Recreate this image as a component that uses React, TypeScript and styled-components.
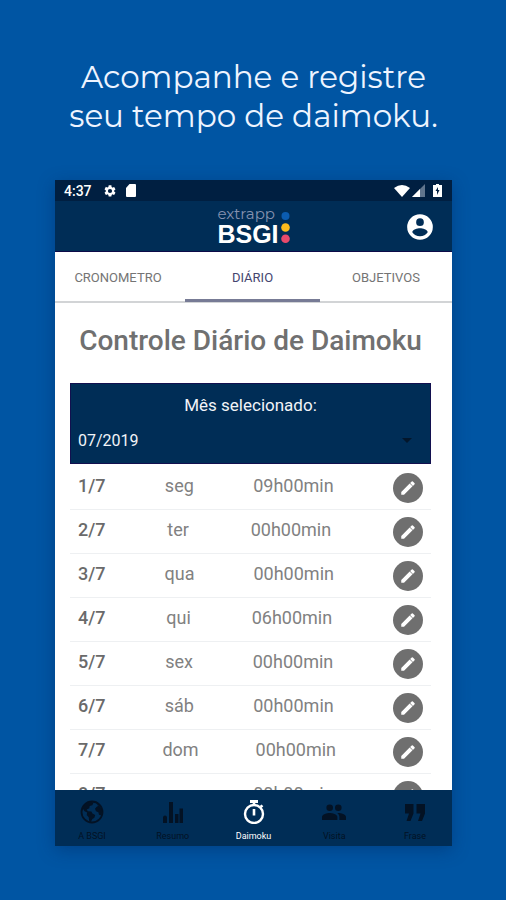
import React from "react";
import styled, { createGlobalStyle } from "styled-components";

const GlobalStyle = createGlobalStyle`
  *, *::before, *::after { box-sizing: border-box; }
  body { margin: 0; background: #0055a3; font-family: Roboto, "Liberation Sans", sans-serif; }
  button, select { font: inherit; color: inherit; border: 0; background: none; padding: 0; margin: 0; }
`;

const Page = styled.main`
  height: 100vh;
  display: flex;
  flex-direction: column;
  padding: 58px 54px 54px 55px;
  background: #0055a3;
  overflow: hidden;
`;

const Headline = styled.h1`
  margin: 0 -20px 44px;
  color: #eef4ff;
  font-family: Montserrat, Figtree, Inter, sans-serif;
  font-size: 31px;
  line-height: 39px;
  font-weight: 400;
  text-align: center;
`;

const HeadlineLine = styled.span`
  display: block;
`;

const Phone = styled.section`
  flex: 1;
  min-height: 0;
  display: flex;
  flex-direction: column;
  background: #fff;
  box-shadow: 0 4px 16px rgba(0, 30, 80, 0.35);
`;

const StatusBar = styled.div`
  flex: none;
  display: flex;
  align-items: center;
  height: 21px;
  padding: 0 10px 0 9px;
  background: #001f41;
  color: #fff;
  font-size: 14px;
  font-weight: 500;
  svg { display: block; }
`;

const StatusGroup = styled.div`
  display: flex;
  align-items: center;
  gap: 8px;
  margin-left: 11px;
`;

const StatusRight = styled(StatusGroup)`
  gap: 2px;
  margin-left: auto;
`;

const BatterySlot = styled.span`
  margin-left: 6px;
`;

const AppBar = styled.header`
  flex: none;
  display: grid;
  grid-template-columns: 1fr auto 1fr;
  align-items: center;
  height: 51px;
  padding: 0 18px;
  background: #002d56;
  border-bottom: 1px solid #0c0a48;
`;

const Logo = styled.div`
  grid-column: 2;
  display: flex;
  align-items: center;
  gap: 2px;
  color: #fff;
`;

const LogoWords = styled.div`
  display: flex;
  flex-direction: column;
`;

const LogoTop = styled.span`
  color: #8592b0;
  font-family: Montserrat, Figtree, Inter, sans-serif;
  font-size: 15px;
  line-height: 16px;
`;

const LogoMain = styled.span`
  font-family: "Liberation Sans", Arial, sans-serif;
  font-size: 25px;
  line-height: 24px;
  font-weight: 700;
`;

const Dots = styled.svg`
  display: block;
  width: 9px;
  height: 34px;
`;

const AccountButton = styled.button`
  justify-self: end;
  width: 28px;
  height: 28px;
  margin-top: 2px;
  color: #fff;
  svg { display: block; }
`;

const Tabs = styled.div`
  flex: none;
  display: grid;
  grid-template-columns: 130fr 135fr 132fr;
  height: 51px;
  border-bottom: 2px solid #d2d4d6;
`;

const Tab = styled.button<{ $active?: boolean }>`
  height: 50px;
  padding-top: 3px;
  font-size: 13px;
  color: ${(p) => (p.$active ? "#45456f" : "#747474")};
  border-bottom: 3px solid ${(p) => (p.$active ? "#777b95" : "transparent")};
  &:first-child { padding-right: 4px; }
`;

const Content = styled.div`
  flex: 1;
  min-height: 0;
  overflow: hidden;
  padding: 0 21px 0 15px;
`;

const Title = styled.h2`
  margin: 20px 0 24px;
  color: #707070;
  font-size: 28px;
  line-height: 36px;
  font-weight: 500;
  text-align: center;
  white-space: nowrap;
`;

const MonthBox = styled.div`
  height: 81px;
  padding: 10px 7px;
  background: #002d56;
  border: 1px solid #12104f;
  color: #f2f4f8;
`;

const MonthLabel = styled.label`
  display: block;
  font-size: 17px;
  line-height: 22px;
  text-align: center;
`;

const SelectRow = styled.div`
  display: grid;
  align-items: center;
  margin-top: 12px;
  > * { grid-area: 1 / 1; }
`;

const MonthSelect = styled.select`
  appearance: none;
  width: 100%;
  height: 24px;
  font-size: 16px;
`;

const Caret = styled.svg`
  justify-self: end;
  margin-right: 11px;
  pointer-events: none;
`;

const Days = styled.ul`
  list-style: none;
  margin: 0;
  padding: 2px 0 0;
`;

const DayRow = styled.li`
  display: flex;
  align-items: center;
  justify-content: space-between;
  height: 44px;
  padding: 0 8px;
  border-bottom: 1px solid #eef0f2;
  color: #818181;
  font-size: 18px;
  line-height: 22px;
`;

const DayText = styled.span`
  padding-bottom: 4px;
`;

const DayDate = styled.strong`
  padding-bottom: 4px;
  color: #6a6a6a;
  font-weight: 500;
`;

const EditButton = styled.button`
  display: grid;
  place-items: center;
  width: 30px;
  height: 30px;
  border-radius: 50%;
  background: #6f6f6f;
  color: #fff;
`;

const BottomNav = styled.nav`
  flex: none;
  display: flex;
  justify-content: space-between;
  height: 56px;
  background: #002d56;
`;

const NavItem = styled.button<{ $active?: boolean }>`
  display: flex;
  flex-direction: column;
  align-items: center;
  gap: 6px;
  width: 74px;
  padding-top: 10px;
  color: ${(p) => (p.$active ? "#fff" : "#031224")};
  font-size: 9px;
  line-height: 12px;
  svg { display: block; }
`;

const Icon = ({ d, size = 24 }: { d: string; size?: number }) => (
  <svg width={size} height={size} viewBox="0 0 24 24" fill="currentColor" aria-hidden="true">
    <path d={d} />
  </svg>
);

const paths = {
  gear: "M19.14 12.94c.04-.3.06-.61.06-.94s-.02-.64-.07-.94l2.03-1.58a.49.49 0 0 0 .12-.61l-1.92-3.32a.49.49 0 0 0-.59-.22l-2.39.96a7 7 0 0 0-1.62-.94l-.36-2.54A.48.48 0 0 0 13.92 2h-3.84a.48.48 0 0 0-.48.41l-.36 2.54a7 7 0 0 0-1.62.94l-2.39-.96a.48.48 0 0 0-.59.22L2.74 8.87a.48.48 0 0 0 .12.61l2.03 1.58a7 7 0 0 0 0 1.88l-2.03 1.58a.49.49 0 0 0-.12.61l1.92 3.32c.12.22.37.29.59.22l2.39-.96c.5.38 1.03.7 1.62.94l.36 2.54c.05.24.24.41.48.41h3.84c.24 0 .44-.17.47-.41l.36-2.54a7 7 0 0 0 1.62-.94l2.39.96c.22.08.47 0 .59-.22l1.92-3.32a.48.48 0 0 0-.12-.61zM12 15.6a3.6 3.6 0 1 1 0-7.2 3.6 3.6 0 0 1 0 7.2z",
  account: "M12 1a11 11 0 1 0 0 22 11 11 0 0 0 0-22zm0 3.600a3.300 3.300 0 1 1 0 6.600 3.300 3.300 0 0 1 0-6.600zm0 15.400a7.900 7.900 0 0 1-6.600-3.500c.03-2.200 4.400-3.400 6.600-3.400s6.570 1.200 6.600 3.400a7.900 7.900 0 0 1-6.600 3.500z",
  pencil: "M3 17.3V21h3.7L18 9.8 14.200 6zM20.800 7a1.200 1.200 0 0 0 0-1.500l-2.300-2.300a1.200 1.200 0 0 0-1.500 0l-2.200 2.200 3.800 3.800z",
  people: "M16.300 11a3.300 3.300 0 1 0 0-6.600 3.300 3.300 0 0 0 0 6.600zM7.700 11a3.300 3.300 0 1 0 0-6.600 3.300 3.300 0 0 0 0 6.600zM7.700 13C5.100 13 0 14.300 0 16.900V20h15.400v-3.100c0-2.600-5.100-3.900-7.700-3.900zM16.300 13l-1.100.1c1.300.9 2.200 2.200 2.200 3.800V20H24v-3.100c0-2.600-5.100-3.900-7.700-3.900z",
  quote: "M2 4h8.500v9.500L7.500 21H3.500l2.500-7.500H2zM13.500 4H22v9.500L19 21h-4l2.500-7.500h-4z",
  bars: "M2 17.500a2 2 0 0 1 4 0V23H2zM8 2h4v21H8zM14 14h3.500v9H14zM18.500 8.500H22V23h-3.500z",
};

const Globe = () => (
  <svg width="24" height="24" viewBox="0 0 24 24" fill="currentColor" aria-hidden="true">
    <circle cx="12" cy="12" r="10.5" fill="none" stroke="currentColor" strokeWidth="1.800" />
    <path d="M2.500 8C4 4.500 7 2 11 1.500l2.500 1.200-1.200 2.600-2.600.7-.4 2.300-2.600 1.200 1.100 1.800 3.600.3 1 2 2.800 1.300-.8 2.800-2 1.200-1.600 3-1.600-.6-.5-4-2-2.300.5-2.400-2.700-1.400zM16.500 3.500l3.700 3.200 2 4.300-.8 4.500-2.400-.7-.6-2.600-2.400-.9-1-2.600 1.700-2 1.400-.6z" />
  </svg>
);

const Stopwatch = () => (
  <svg width="24" height="24" viewBox="0 0 24 24" fill="none" stroke="currentColor" aria-hidden="true">
    <circle cx="12" cy="14" r="9" strokeWidth="2.400" />
    <path d="M8 1.500h8" strokeWidth="3" />
    <path d="M12 2v3M12 9v6.500M18.700 7l1.700-1.700" strokeWidth="2.600" />
  </svg>
);

const days = [
  ["1/7", "seg", "09h00min"],
  ["2/7", "ter", "00h00min"],
  ["3/7", "qua", "00h00min"],
  ["4/7", "qui", "06h00min"],
  ["5/7", "sex", "00h00min"],
  ["6/7", "sáb", "00h00min"],
  ["7/7", "dom", "00h00min"],
  ["8/7", "seg", "00h00min"],
];

export default function App() {
  return (
    <Page>
      <GlobalStyle />
      <Headline>
        <HeadlineLine>Acompanhe e registre</HeadlineLine>
        <HeadlineLine>seu tempo de daimoku.</HeadlineLine>
      </Headline>
      <Phone>
        <StatusBar>
          <span>4:37</span>
          <StatusGroup>
            <Icon d={paths.gear} size={14} />
            <svg width="12" height="13" viewBox="0 0 12 13" fill="#fff" aria-hidden="true">
              <path d="M4.500 0H10q1 0 1 1v11q0 1-1 1H2q-1 0-1-1V4z" />
            </svg>
          </StatusGroup>
          <StatusRight>
            <svg width="16" height="12" viewBox="0 0 16 12" fill="#fff" aria-hidden="true">
              <path d="M0 3q8-6 16 0L8 12z" />
            </svg>
            <svg width="13" height="13" viewBox="0 0 13 13" aria-hidden="true">
              <path d="M13 0v13H0z" fill="#61758d" />
              <path d="M8 5v8H0z" fill="#fff" />
            </svg>
            <BatterySlot>
              <svg width="9" height="13" viewBox="0 0 9 13" aria-hidden="true">
                <path d="M3 0h3v1h3v12H0V1h3z" fill="#fff" />
                <path d="M5 3L2.500 7H4v4l2.500-5H5z" fill="#001f41" />
              </svg>
            </BatterySlot>
          </StatusRight>
        </StatusBar>
        <AppBar>
          <Logo>
            <LogoWords>
              <LogoTop>extrapp</LogoTop>
              <LogoMain>BSGI</LogoMain>
            </LogoWords>
            <Dots viewBox="0 0 9 34" aria-hidden="true">
              <circle cx="4.500" cy="7" r="4" fill="#0b5cb0" />
              <circle cx="4.500" cy="18.500" r="4.300" fill="#fdbb1c" />
              <circle cx="4.500" cy="29.700" r="4.300" fill="#e84a6b" />
            </Dots>
          </Logo>
          <AccountButton aria-label="Conta">
            <Icon d={paths.account} size={28} />
          </AccountButton>
        </AppBar>
        <Tabs role="tablist">
          <Tab role="tab">CRONOMETRO</Tab>
          <Tab role="tab" aria-selected $active>DIÁRIO</Tab>
          <Tab role="tab">OBJETIVOS</Tab>
        </Tabs>
        <Content>
          <Title>Controle Diário de Daimoku</Title>
          <MonthBox>
            <MonthLabel htmlFor="month">Mês selecionado:</MonthLabel>
            <SelectRow>
              <MonthSelect id="month" defaultValue="07/2019">
                <option>07/2019</option>
              </MonthSelect>
              <Caret width="10" height="5" viewBox="0 0 10 5" aria-hidden="true">
                <path d="M0 0h10L5 5z" fill="#03162b" />
              </Caret>
            </SelectRow>
          </MonthBox>
          <Days>
            {days.map(([date, weekday, time]) => (
              <DayRow key={date}>
                <DayDate>{date}</DayDate>
                <DayText>{weekday}</DayText>
                <DayText>{time}</DayText>
                <EditButton aria-label={`Editar ${date}`}>
                  <Icon d={paths.pencil} size={18} />
                </EditButton>
              </DayRow>
            ))}
          </Days>
        </Content>
        <BottomNav>
          <NavItem><Globe />A BSGI</NavItem>
          <NavItem><Icon d={paths.bars} />Resumo</NavItem>
          <NavItem $active><Stopwatch />Daimoku</NavItem>
          <NavItem><Icon d={paths.people} />Visita</NavItem>
          <NavItem><Icon d={paths.quote} />Frase</NavItem>
        </BottomNav>
      </Phone>
    </Page>
  );
}
